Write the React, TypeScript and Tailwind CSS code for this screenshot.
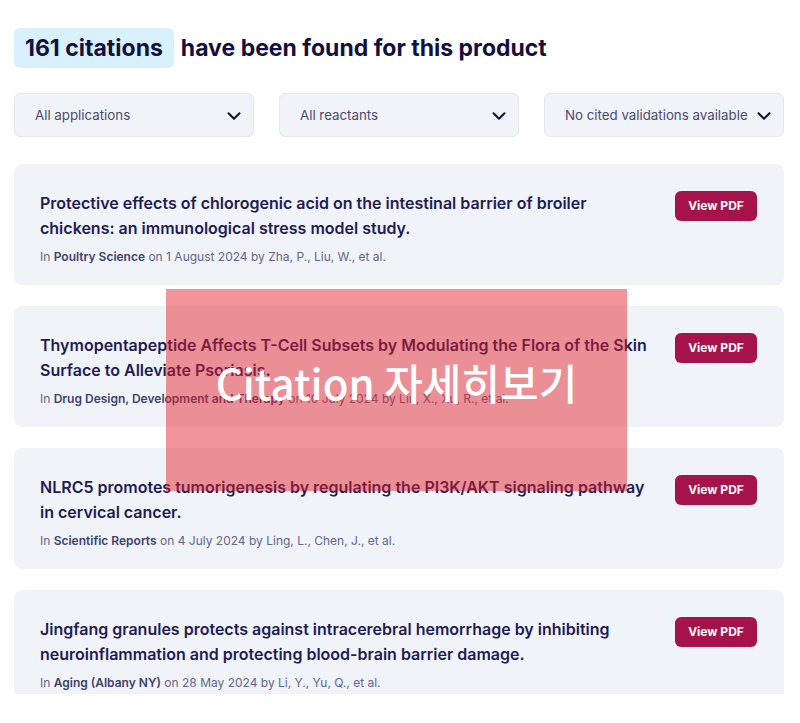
import { ChevronDown } from 'lucide-react'

type Citation = {
  title: string
  journal: string
  date: string
  authors: string
}

const citations: Citation[] = [
  {
    title:
      'Protective effects of chlorogenic acid on the intestinal barrier of broiler chickens: an immunological stress model study.',
    journal: 'Poultry Science',
    date: '1 August 2024',
    authors: 'Zha, P., Liu, W., et al.'
  },
  {
    title:
      'Thymopentapeptide Affects T-Cell Subsets by Modulating the Flora of the Skin Surface to Alleviate Psoriasis.',
    journal: 'Drug Design, Development and Therapy',
    date: '10 July 2024',
    authors: 'Liu, X., Xu, R., et al.'
  },
  {
    title:
      'NLRC5 promotes tumorigenesis by regulating the PI3K/AKT signaling pathway in cervical cancer.',
    journal: 'Scientific Reports',
    date: '4 July 2024',
    authors: 'Ling, L., Chen, J., et al.'
  },
  {
    title:
      'Jingfang granules protects against intracerebral hemorrhage by inhibiting neuroinflammation and protecting blood-brain barrier damage.',
    journal: 'Aging (Albany NY)',
    date: '28 May 2024',
    authors: 'Li, Y., Yu, Q., et al.'
  }
]

const filters = ['All applications', 'All reactants', 'No cited validations available']

function FilterSelect({ label }: { label: string }) {
  return (
    <button className="flex h-[44px] w-[240px] items-center justify-between rounded-md border border-[#e3e8ef] bg-[#f0f3f7] pl-[20px] pr-[8px] pt-[2px] text-left">
      <span className="whitespace-nowrap text-[13.3px] text-[#4b4a6e]">{label}</span>
      <ChevronDown size={22} strokeWidth={2.3} className="shrink-0 text-[#14113f]" />
    </button>
  )
}

function CitationCard({ c }: { c: Citation }) {
  return (
    <div className="flex items-start justify-between gap-4 rounded-lg bg-[#f0f3f7] pb-[20px] pl-[26px] pr-[27px] pt-[27px]">
      <div className="w-[620px]">
        <h3 className="text-[16px] font-semibold leading-[25px] text-[#1e1b57]">{c.title}</h3>
        <p className="mt-[8px] text-[12px] leading-[16px] text-[#64658a]">
          In <span className="font-semibold text-[#403f6f]">{c.journal}</span> on {c.date} by{' '}
          {c.authors}
        </p>
      </div>
      <button className="flex h-[30px] w-[82px] shrink-0 items-center justify-center rounded-md bg-[#a6124a] text-[12px] font-bold text-white">
        View PDF
      </button>
    </div>
  )
}

export default function App() {
  return (
    <div
      className="relative h-[694px] overflow-hidden bg-white pl-[14px] pr-[16px] pt-[28px]"
      style={{ fontFamily: 'Inter, "Noto Sans", sans-serif' }}
    >
      <div className="flex items-center gap-[7px]">
        <span className="rounded-md bg-[#d8f1fc] px-[11px] py-[6px] text-[23px] font-bold leading-[28px] text-[#13103f]">
          161 citations
        </span>
        <h2 className="text-[23px] font-bold leading-[28px] text-[#13103f]">
          have been found for this product
        </h2>
      </div>

      <div className="mt-[25px] flex gap-[25px]">
        {filters.map((f) => (
          <FilterSelect key={f} label={f} />
        ))}
      </div>

      <div className="mt-[27px] flex flex-col gap-[21px]">
        {citations.map((c) => (
          <CitationCard key={c.title} c={c} />
        ))}
      </div>

      <div className="absolute left-[166px] top-[289px] flex h-[202px] w-[461px] items-center justify-center bg-[rgba(228,30,40,0.47)] pb-[16px]">
        <span
          className="text-[42px] font-medium leading-none text-white"
          style={{ fontFamily: '"Noto Sans CJK KR", "Noto Sans", sans-serif' }}
        >
          Citation 자세히보기
        </span>
      </div>
    </div>
  )
}
